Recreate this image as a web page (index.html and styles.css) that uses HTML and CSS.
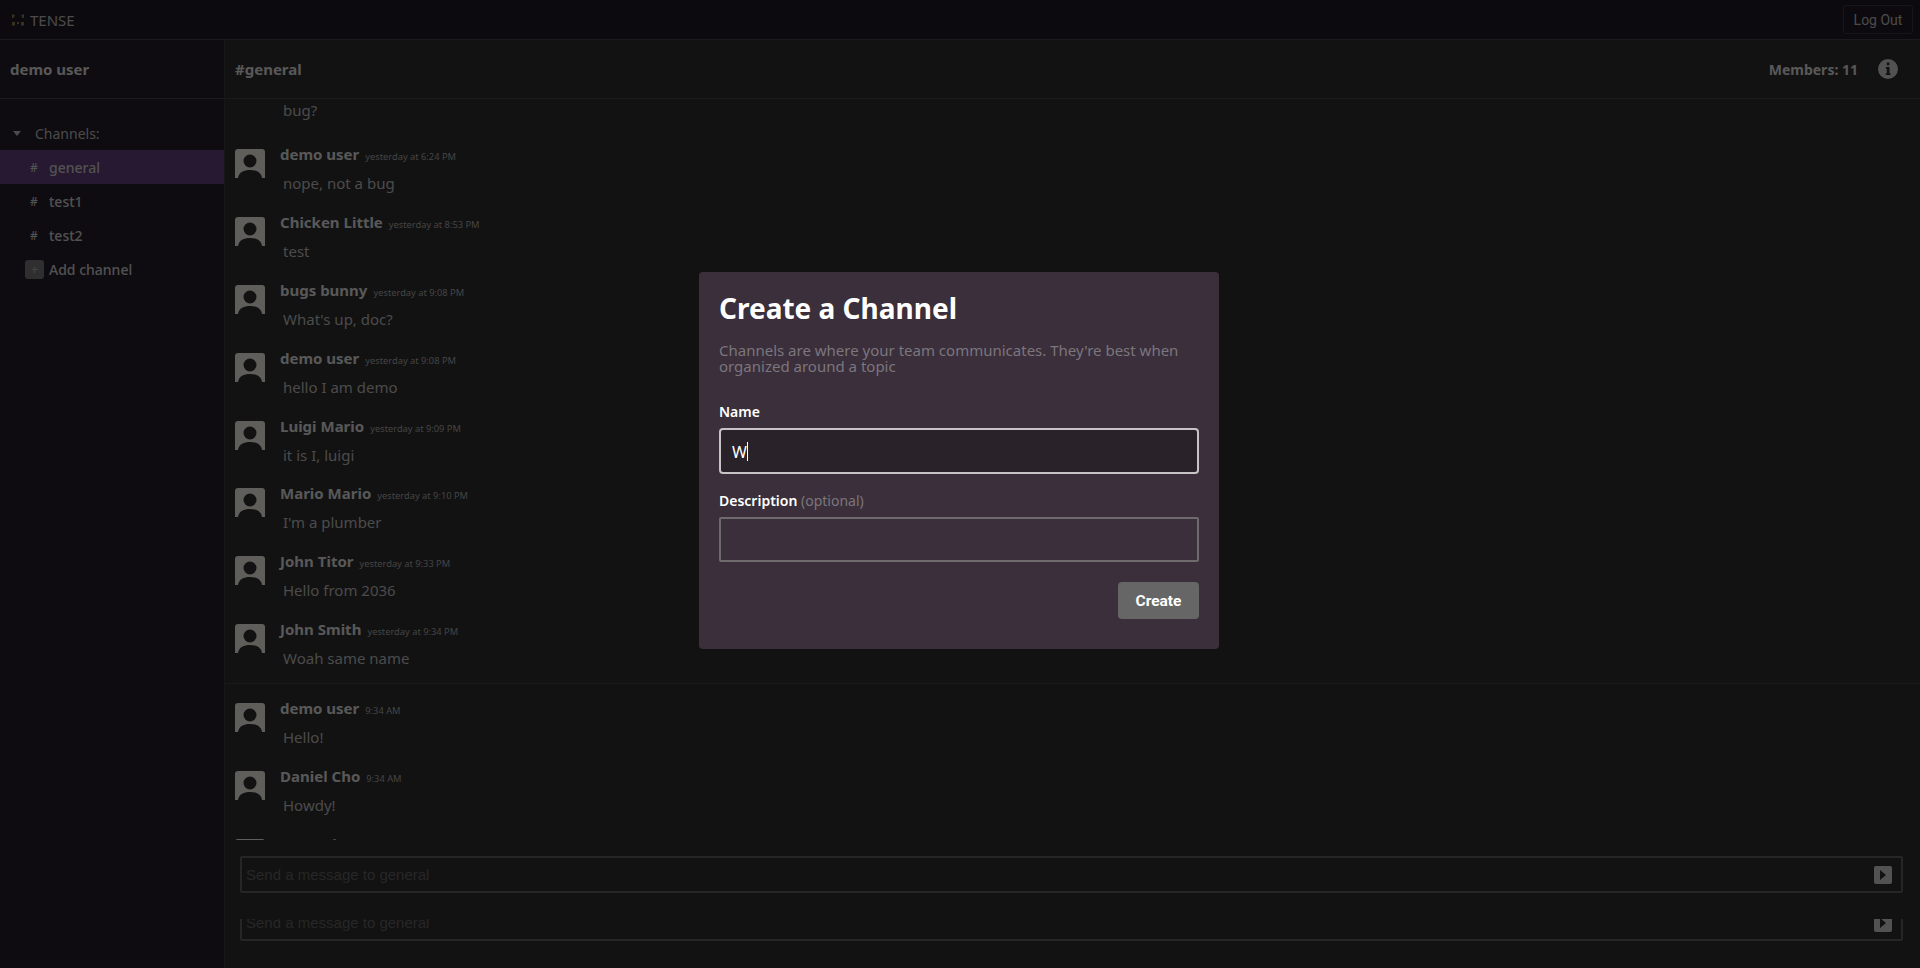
FILE: index.html
```html
<!doctype html>
<html>
  <head>
    <title>TENSE</title>
    <meta name="viewport" content="initial-scale=1, maximum-scale=1">
    <link rel="stylesheet" href="styles.css">
  </head>
  <body>
    <header class="topbar">
      <div class="brand">
        <svg class="brand-logo" viewBox="0 0 14 14"><path d="M1 1l3 1.500L2.500 5 1 5zM13 1l-3 1.500L11.500 5 13 5zM1 9h3v3.500H1zM10 9h3v3.500h-3zM6 9h2v2H6z"/></svg>
        <span>TENSE</span>
      </div>
      <button class="logout">Log Out</button>
    </header>

    <div class="app">
      <aside class="sidebar">
        <div class="user">demo user</div>
        <div class="channels">
          <div class="channels-title"><i class="caret"></i>Channels:</div>
          <div class="channel active"><span class="hash">#</span>general</div>
          <div class="channel"><span class="hash">#</span>test1</div>
          <div class="channel"><span class="hash">#</span>test2</div>
          <div class="channel add"><span class="plus">+</span>Add channel</div>
        </div>
      </aside>

      <main class="main">
        <div class="chan-head">
          <b>#general</b>
          <span class="members">Members: 11</span>
          <svg class="info" viewBox="0 0 20 20"><circle cx="10" cy="10" r="10"/><path class="info-i" d="M8.800 3.500h2.600v2.700H8.800zM7.800 8h3.700v6.300h1v1.700H7.800v-1.700h1v-4.600h-1z"/></svg>
        </div>

        <div class="messages">
          <div class="msg-tail">bug?</div>

          <div class="msg">
            <svg class="avatar" viewBox="0 0 30 29"><use href="#person"/></svg>
            <div class="msg-body">
              <div class="msg-top"><b>demo user</b><small>yesterday at 6:24 PM</small></div>
              <p>nope, not a bug</p>
            </div>
          </div>
          <div class="msg">
            <svg class="avatar" viewBox="0 0 30 29"><use href="#person"/></svg>
            <div class="msg-body">
              <div class="msg-top"><b>Chicken Little</b><small>yesterday at 8:53 PM</small></div>
              <p>test</p>
            </div>
          </div>
          <div class="msg">
            <svg class="avatar" viewBox="0 0 30 29"><use href="#person"/></svg>
            <div class="msg-body">
              <div class="msg-top"><b>bugs bunny</b><small>yesterday at 9:08 PM</small></div>
              <p>What's up, doc?</p>
            </div>
          </div>
          <div class="msg">
            <svg class="avatar" viewBox="0 0 30 29"><use href="#person"/></svg>
            <div class="msg-body">
              <div class="msg-top"><b>demo user</b><small>yesterday at 9:08 PM</small></div>
              <p>hello I am demo</p>
            </div>
          </div>
          <div class="msg">
            <svg class="avatar" viewBox="0 0 30 29"><use href="#person"/></svg>
            <div class="msg-body">
              <div class="msg-top"><b>Luigi Mario</b><small>yesterday at 9:09 PM</small></div>
              <p>it is I, luigi</p>
            </div>
          </div>
          <div class="msg">
            <svg class="avatar" viewBox="0 0 30 29"><use href="#person"/></svg>
            <div class="msg-body">
              <div class="msg-top"><b>Mario Mario</b><small>yesterday at 9:10 PM</small></div>
              <p>I'm a plumber</p>
            </div>
          </div>
          <div class="msg">
            <svg class="avatar" viewBox="0 0 30 29"><use href="#person"/></svg>
            <div class="msg-body">
              <div class="msg-top"><b>John Titor</b><small>yesterday at 9:33 PM</small></div>
              <p>Hello from 2036</p>
            </div>
          </div>
          <div class="msg">
            <svg class="avatar" viewBox="0 0 30 29"><use href="#person"/></svg>
            <div class="msg-body">
              <div class="msg-top"><b>John Smith</b><small>yesterday at 9:34 PM</small></div>
              <p>Woah same name</p>
            </div>
          </div>

          <hr class="divider">

          <div class="msg">
            <svg class="avatar" viewBox="0 0 30 29"><use href="#person"/></svg>
            <div class="msg-body">
              <div class="msg-top"><b>demo user</b><small>9:34 AM</small></div>
              <p>Hello!</p>
            </div>
          </div>
          <div class="msg">
            <svg class="avatar" viewBox="0 0 30 29"><use href="#person"/></svg>
            <div class="msg-body">
              <div class="msg-top"><b>Daniel Cho</b><small>9:34 AM</small></div>
              <p>Howdy!</p>
            </div>
          </div>
          <div class="msg">
            <svg class="avatar" viewBox="0 0 30 29"><use href="#person"/></svg>
            <div class="msg-body">
              <div class="msg-top"><b>Tom Brian</b></div>
            </div>
          </div>
        </div>

        <div class="composer">
          <div class="send-box">
            <span class="placeholder">Send a message to general</span>
            <span class="send"><i></i></span>
          </div>
        </div>
        <div class="composer-ghost">
          <div class="send-box">
            <span class="placeholder">Send a message to general</span>
            <span class="send"><i></i></span>
          </div>
        </div>
      </main>
    </div>

    <svg class="defs" width="0" height="0">
      <symbol id="person" viewBox="0 0 30 29">
        <path class="avatar-bg" d="M3 0h24a3 3 0 0 1 3 3v26H0V3a3 3 0 0 1 3-3z"/>
        <circle class="avatar-fg" cx="15" cy="12" r="6.500"/>
        <path class="avatar-fg" d="M3 29c1-6 6-8 12-8s11 2 12 8z"/>
      </symbol>
    </svg>

    <div class="overlay"></div>

    <form class="modal" onsubmit="return false">
      <h1>Create a Channel</h1>
      <p class="modal-desc">Channels are where your team communicates. They're best when organized around a topic</p>
      <label class="field-label">Name</label>
      <div class="field focus">W<span class="cursor"></span></div>
      <label class="field-label second">Description <span>(optional)</span></label>
      <div class="field"></div>
      <div class="modal-foot"><button class="create">Create</button></div>
    </form>
  </body>
</html>
```

FILE: styles.css
```css
* {
  box-sizing: border-box;
  margin: 0;
  padding: 0;
}

html, body {
  height: 100%;
  overflow: hidden;
}

body {
  display: flex;
  flex-direction: column;
  font-family: "Noto Sans", sans-serif;
  background: #2d2d2d;
  color: #ddd;
}

.topbar {
  height: 40px;
  flex: none;
  display: flex;
  align-items: center;
  justify-content: space-between;
  padding: 0 7px 0 11px;
  background: #1f1b24;
  border-bottom: 1px solid #444;
}

.brand {
  display: flex;
  align-items: center;
  gap: 5px;
  font-size: 15px;
  color: #bbb;
}

.brand-logo {
  width: 14px;
  height: 14px;
  fill: #8a7f50;
}

.logout {
  width: 70px;
  height: 29px;
  background: none;
  border: 1px solid #3a3a3a;
  border-radius: 3px;
  color: #bbb;
  font: 14px "Roboto", sans-serif;
}

.app {
  flex: 1;
  display: flex;
  min-height: 0;
}

.sidebar {
  width: 225px;
  flex: none;
  background: #251f2a;
  border-right: 1px solid #3a3a3a;
}

.user {
  height: 59px;
  padding-left: 10px;
  display: flex;
  align-items: center;
  font-size: 15px;
  font-weight: 700;
  border-bottom: 1px solid #444;
}

.channels {
  padding-top: 17px;
}

.channels-title {
  height: 34px;
  display: flex;
  align-items: center;
  padding-left: 13px;
  font-size: 14px;
  color: #bbb;
}

.caret {
  width: 0;
  height: 0;
  border: 4.500px solid transparent;
  border-top: 5px solid #bbb;
  border-bottom: 0;
  margin-right: 14px;
}

.channel {
  height: 34px;
  display: flex;
  align-items: center;
  padding-left: 30px;
  font-size: 14px;
  font-weight: 500;
  color: #ccc;
}

.channel.active {
  background: #60407a;
}

.hash {
  width: 19px;
  font-size: 12px;
}

.plus {
  width: 19px;
  height: 19px;
  margin: 0 5px 0 -5px;
  border-radius: 3px;
  background: #777;
  color: #aaa;
  text-align: center;
  line-height: 19px;
  font-size: 13px;
}

.main {
  flex: 1;
  min-width: 0;
  display: flex;
  flex-direction: column;
}

.chan-head {
  height: 59px;
  flex: none;
  display: flex;
  align-items: center;
  padding: 0 22px 0 10px;
  font-size: 15px;
  border-bottom: 1px solid #444;
}

.chan-head b {
  flex: 1;
}

.members {
  font-size: 14px;
  font-weight: 700;
  margin-right: 20px;
}

.info {
  width: 20px;
  height: 20px;
}

.info circle {
  fill: #ccc;
}

.info-i {
  fill: #2d2d2d;
}

.messages {
  height: 741px;
  flex: none;
  overflow: hidden;
  padding-top: 1px;
}

.msg-tail {
  height: 40px;
  padding-left: 58px;
  font-size: 15px;
  line-height: 21px;
  color: #bbb;
}

.msg {
  height: 67.900px;
  flex: none;
  display: flex;
  padding: 9px 0 0 10px;
}

.avatar {
  width: 30px;
  height: 29px;
  flex: none;
}

.avatar-bg {
  fill: #eeeae4;
}

.avatar-fg {
  fill: #2d2d2d;
}

.msg-body {
  margin-left: 15px;
}

.msg-top {
  display: flex;
  align-items: baseline;
  gap: 6px;
  height: 20px;
  margin-top: -5px;
  line-height: 20px;
}

.msg-top b {
  font-size: 15px;
}

.msg-top small {
  font-size: 9.300px;
  color: #aaa;
}

.msg p {
  margin: 9px 0 0 3px;
  font-size: 15px;
  line-height: 20px;
  color: #bbb;
}

.divider {
  border: 0;
  border-top: 1px solid #444;
  margin: 0 0 10px;
}

.composer {
  height: 79px;
  flex: none;
  padding: 16px 17px 0 15px;
}

/* second box is cut off at the top, the way it is on the real page */
.composer-ghost {
  flex: 1;
  min-height: 0;
  overflow: hidden;
  display: flex;
  flex-direction: column;
  padding: 0 17px 0 15px;
}

.composer-ghost .send-box {
  flex: none;
  margin-top: -15px;
}

.send-box {
  height: 37px;
  display: flex;
  align-items: center;
  justify-content: space-between;
  padding: 0 9px 0 4px;
  border: 2px solid #5f5f5f;
  border-radius: 2px;
}

.placeholder {
  font: 15px "Liberation Sans", sans-serif;
  color: #626262;
}

.send {
  width: 18px;
  height: 18px;
  display: flex;
  align-items: center;
  justify-content: center;
  border-radius: 2px;
  background: #ccc;
}

.send i {
  width: 0;
  height: 0;
  border: 5.500px solid transparent;
  border-left: 6px solid #2d2d2d;
  border-right: 0;
}

.defs {
  position: absolute;
}

.overlay {
  position: fixed;
  inset: 0;
  background: rgba(0, 0, 0, 0.6);
}

.modal {
  position: fixed;
  top: 272px;
  left: 699px;
  width: 520px;
  height: 377px;
  padding: 20px;
  border-radius: 4px;
  background: #3a2f3a;
  color: #fff;
}

.modal h1 {
  font-size: 28px;
  line-height: 33px;
  font-weight: 700;
}

.modal-desc {
  margin-top: 17px;
  font-size: 15px;
  line-height: 16px;
  color: #7c767e;
}

.field-label {
  display: block;
  margin-top: 28px;
  height: 26px;
  font-size: 14px;
  line-height: 20px;
  font-weight: 600;
}

.field-label.second {
  margin-top: 17px;
}

.field-label span {
  font-weight: 400;
  color: #7c767e;
}

.field {
  height: 45px;
  padding-left: 11px;
  display: flex;
  align-items: center;
  border: 2px solid #6e6a6e;
  border-radius: 2px;
  font-size: 16px;
}

.field.focus {
  height: 46px;
  padding-top: 1px;
  border-color: #c6c4c6;
  border-radius: 4px;
  background: #2a2229;
}

.cursor {
  width: 1px;
  height: 19px;
  background: #fff;
}

.modal-foot {
  margin-top: 20px;
  display: flex;
  justify-content: flex-end;
}

.create {
  width: 81px;
  height: 37px;
  border: 0;
  border-radius: 4px;
  background: #666;
  color: #fff;
  font: 700 15.500px "Roboto", sans-serif;
}
```
